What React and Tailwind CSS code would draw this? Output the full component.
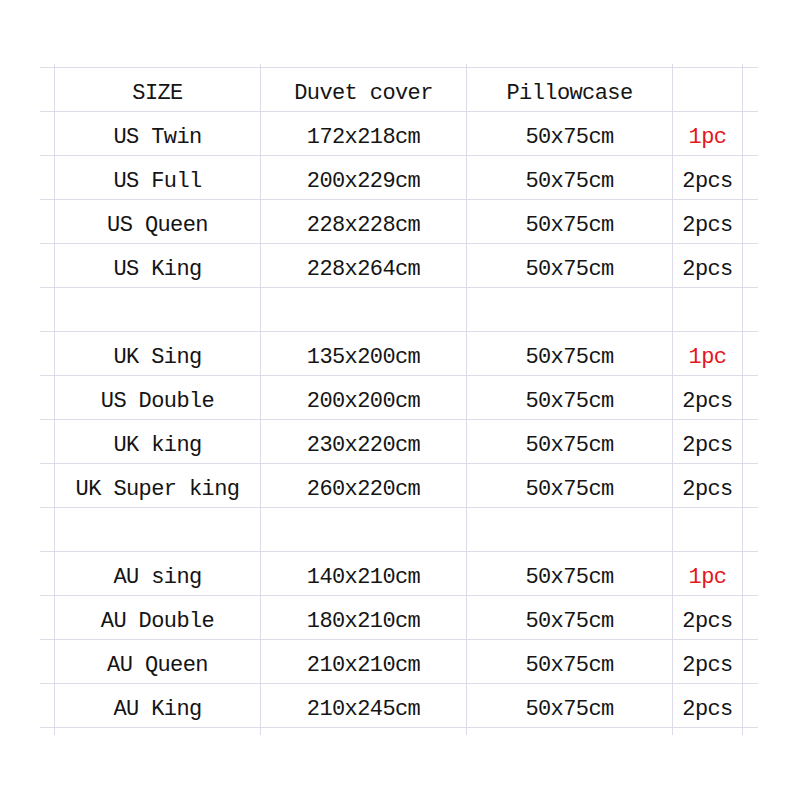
import React from "react";

const rows = [
  ["US Twin", "172x218cm", "50x75cm", "1pc"],
  ["US Full", "200x229cm", "50x75cm", "2pcs"],
  ["US Queen", "228x228cm", "50x75cm", "2pcs"],
  ["US King", "228x264cm", "50x75cm", "2pcs"],
  null,
  ["UK Sing", "135x200cm", "50x75cm", "1pc"],
  ["US Double", "200x200cm", "50x75cm", "2pcs"],
  ["UK king", "230x220cm", "50x75cm", "2pcs"],
  ["UK Super king", "260x220cm", "50x75cm", "2pcs"],
  null,
  ["AU sing", "140x210cm", "50x75cm", "1pc"],
  ["AU Double", "180x210cm", "50x75cm", "2pcs"],
  ["AU Queen", "210x210cm", "50x75cm", "2pcs"],
  ["AU King", "210x245cm", "50x75cm", "2pcs"],
];

const gridCls = "grid grid-cols-[14px_206px_206px_206px_70px_16px]";
const cell = "border-l border-[#dcdde8] flex items-center justify-center pt-[8px] whitespace-nowrap";

function Row({ data }) {
  const cells = data || ["", "", "", ""];
  return (
    <div className={`${gridCls} h-[44px] border-b border-[#dcdde8]`}>
      <div />
      {cells.map((c, i) => (
        <div
          key={i}
          className={`${cell} ${c === "1pc" ? "text-[#e3171c]" : "text-[#141414]"}`}
        >
          {c}
        </div>
      ))}
      <div className="border-l border-[#dcdde8]" />
    </div>
  );
}

function Strip({ h }) {
  return (
    <div className={`${gridCls} ${h}`}>
      <div />
      <div className="border-l border-[#dcdde8]" />
      <div className="border-l border-[#dcdde8]" />
      <div className="border-l border-[#dcdde8]" />
      <div className="border-l border-[#dcdde8]" />
      <div className="border-l border-[#dcdde8]" />
    </div>
  );
}

export default function App() {
  return (
    <div className="w-[800px] h-[800px] bg-white pt-[64px] pl-[40px] font-['Liberation_Mono',monospace] text-[22px] tracking-[-0.6px]">
      <div className="w-[718px]">
        <Strip h="h-[3px]" />
        <div className="border-t border-[#dcdde8]">
          <Row data={["SIZE", "Duvet cover", "Pillowcase", ""]} />
          {rows.map((r, i) => (
            <Row key={i} data={r} />
          ))}
        </div>
        <Strip h="h-[7px]" />
      </div>
    </div>
  );
}
